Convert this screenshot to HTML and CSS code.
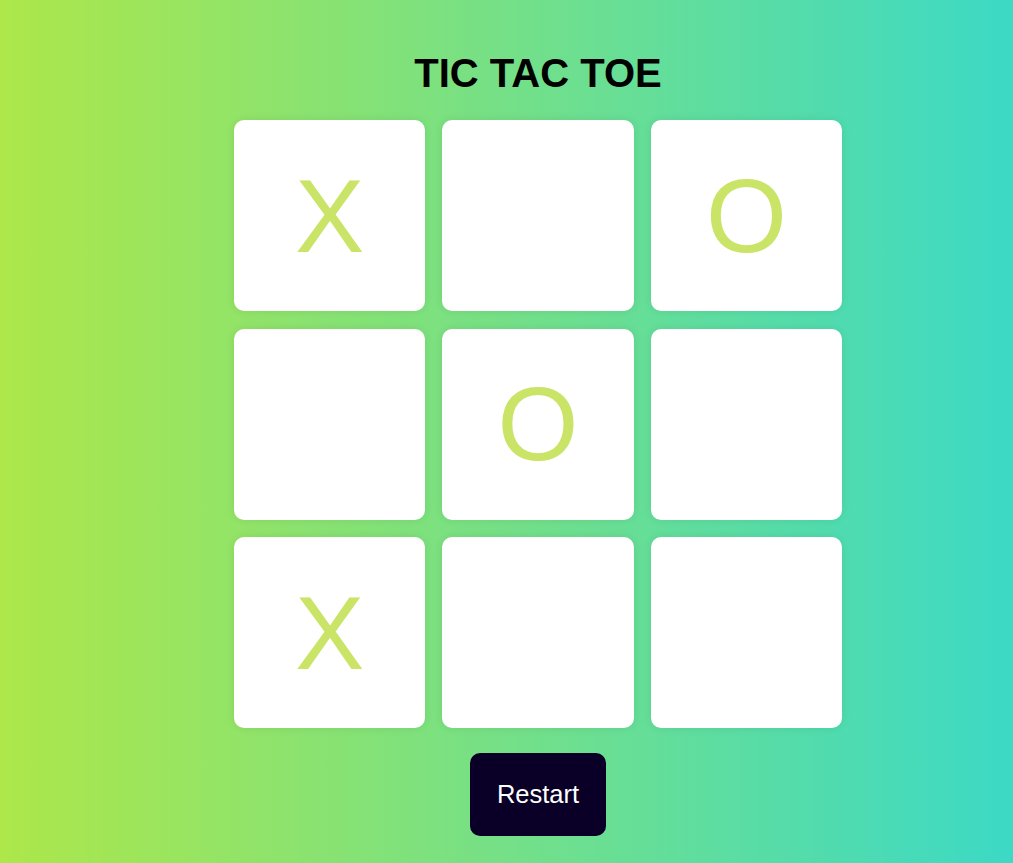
FILE: index.html
```html
<!DOCTYPE html>
<html lang="en">
<head>
<meta charset="utf-8">
<title>Tic Tac Toe</title>
<link rel="stylesheet" href="styles.css">
</head>
<body>
<main class="game">
  <h1 class="title">TIC TAC TOE</h1>
  <div class="board">
    <div class="cell">X</div>
    <div class="cell"></div>
    <div class="cell">O</div>
    <div class="cell"></div>
    <div class="cell">O</div>
    <div class="cell"></div>
    <div class="cell">X</div>
    <div class="cell"></div>
    <div class="cell"></div>
  </div>
  <button class="restart">Restart</button>
</main>
</body>
</html>
```
FILE: styles.css
```css
* { box-sizing: border-box; }
html, body { height: 100%; }
body {
  margin: 0;
  font-family: "Liberation Sans", Arial, sans-serif;
  background: linear-gradient(90deg, #ade74a 0%, #3cd9c5 100%);
  overflow: hidden;
}
.game {
  width: 608px;
  margin-left: 234px;
  display: flex;
  flex-direction: column;
  align-items: center;
}
.title {
  margin: 50px 0 0;
  font-size: 40px;
  line-height: 46px;
  font-weight: 700;
  color: #000;
}
.board {
  margin-top: 24px;
  width: 608px;
  display: grid;
  grid-template-columns: repeat(3, 1fr);
  grid-auto-rows: 191.3px;
  gap: 17.3px;
}
.cell {
  background: #fff;
  border-radius: 10px;
  box-shadow: 0 0 10px rgba(0, 0, 0, 0.08);
  display: flex;
  align-items: center;
  justify-content: center;
  font-size: 104px;
  color: #c9e466;
  line-height: 1;
}
.restart {
  margin-top: 25px;
  width: 136px;
  height: 83px;
  padding: 0;
  border: none;
  border-radius: 10px;
  background: #0a0027;
  color: #fff;
  font-family: "Liberation Sans", Arial, sans-serif;
  font-size: 25.5px;
}
```
